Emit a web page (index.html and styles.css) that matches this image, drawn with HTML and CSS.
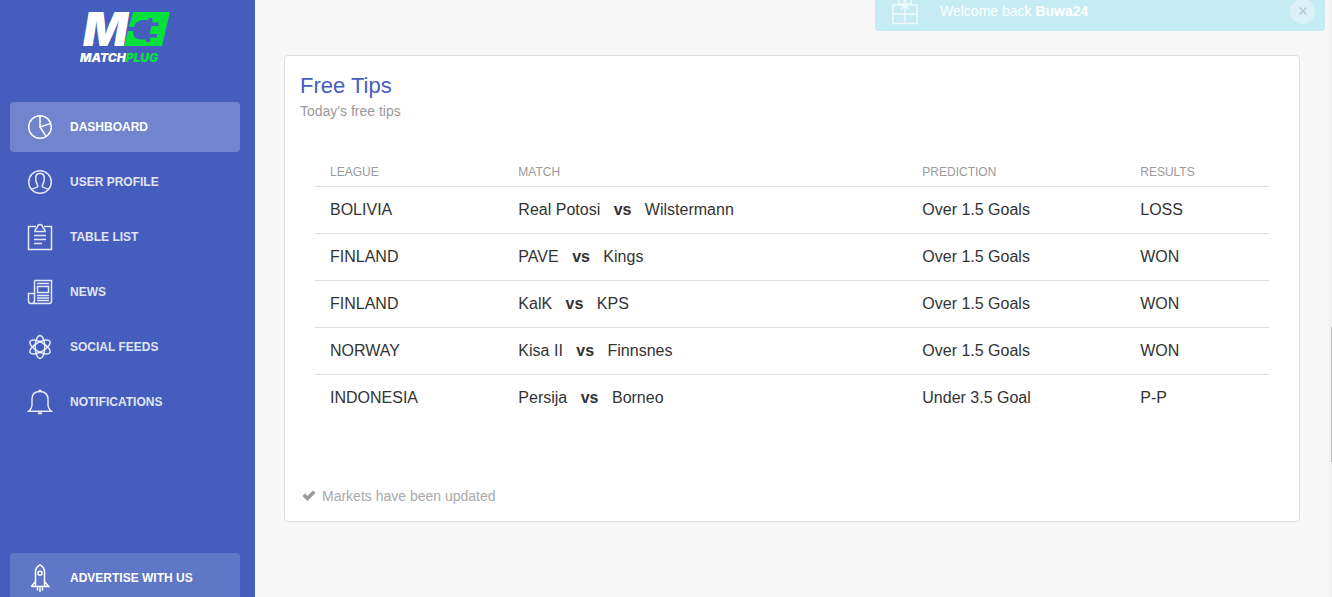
FILE: index.html
```html
<!DOCTYPE html>
<html lang="en">
<head>
    <meta charset="UTF-8">
    <meta name="viewport" content="width=device-width, initial-scale=1.0">
    <title>MatchPlug</title>
    <link rel="stylesheet" href="styles.css">
</head>
<body>
    <div class="wrapper">
        <div class="sidebar">
            <a class="logo" href="#">
                <svg width="100" height="66" viewBox="0 0 100 66">
                    <path class="plug-bg" d="M53 12H90L82 46H44Z"/>
                    <path class="plug" d="M47 27H54C55 22.5 59 20 63.5 20H68.5V18H72.5V22.5H78.5V26H71.5L69.5 34H77V37.5H70V42H66V39.5H61C56 39.5 52.5 36 53 31H46Z"/>
                    <text class="logo-m" x="3" y="46">M</text>
                    <text class="logo-name" x="0" y="62">MATCH<tspan class="green">PLUG</tspan></text>
                </svg>
            </a>
            <ul class="nav">
                <li>
                    <a class="nav-link active" href="#">
                        <svg class="icon" viewBox="0 0 30 30"><circle cx="15" cy="15" r="11.3"/><path d="M15 3.7V15L25.8 11.4M15 15L21.2 24.4"/></svg>
                        <span>DASHBOARD</span>
                    </a>
                </li>
                <li>
                    <a class="nav-link" href="#">
                        <svg class="icon" viewBox="0 0 30 30"><circle cx="15" cy="15" r="11.3"/><path d="M7 22.6C8 20.7 12.8 21 12.8 19.4C12.8 17.5 10.7 16.5 10.7 11.2C10.7 8 12.2 6.5 15 6.5C17.8 6.5 19.3 8 19.3 11.2C19.3 16.5 17.2 17.5 17.2 19.4C17.2 21 22 20.7 23 22.6"/></svg>
                        <span>USER PROFILE</span>
                    </a>
                </li>
                <li>
                    <a class="nav-link" href="#">
                        <svg class="icon" viewBox="0 0 30 30"><path d="M11 4.5H3.5V27.5H26.5V4.5H19M10 9.5H20V8.5C20 6.5 18 6.8 17.6 5C17.3 1.5 12.7 1.5 12.4 5C12 6.8 10 6.5 10 8.5ZM9 13.5H21M9 17.5H21M9 21.5H17"/></svg>
                        <span>TABLE LIST</span>
                    </a>
                </li>
                <li>
                    <a class="nav-link" href="#">
                        <svg class="icon" viewBox="0 0 30 30"><path d="M9.5 3.5H26.5V24Q26.5 26.5 24 26.5H6Q3.5 26.5 3.5 24V16.5H9.5M9.5 3.5V24Q9.5 26.5 6.5 26.5M12 6.5H24M12.5 9.5H23.5V15.5H12.5ZM12 18.5H24M12 21H24M12 23.5H24"/></svg>
                        <span>NEWS</span>
                    </a>
                </li>
                <li>
                    <a class="nav-link" href="#">
                        <svg class="icon" viewBox="0 0 30 30"><ellipse cx="15" cy="15" rx="4.8" ry="11.4"/><ellipse cx="15" cy="15" rx="4.8" ry="11.4" transform="rotate(60 15 15)"/><ellipse cx="15" cy="15" rx="4.8" ry="11.4" transform="rotate(120 15 15)"/></svg>
                        <span>SOCIAL FEEDS</span>
                    </a>
                </li>
                <li>
                    <a class="nav-link" href="#">
                        <svg class="icon" viewBox="0 0 30 30"><path d="M3.8 24.2H26.2C24 22.5 23 20.5 23 17V12C23 7.5 20 4.6 15 4.6C10 4.6 7 7.5 7 12V17C7 20.5 6 22.5 3.8 24.2Z"/><path d="M13.5 3.8H16.5M13 26.2H17" stroke-width="2"/></svg>
                        <span>NOTIFICATIONS</span>
                    </a>
                </li>
            </ul>
            <a class="nav-link advertise" href="#">
                <svg class="icon" viewBox="0 0 30 30"><path d="M10.5 23V9Q10.5 4 15 1.8Q19.5 4 19.5 9V23M6.3 23.4H23.7L19.5 18.5M10.5 18.5L6.3 23.4M12.5 24.5V27.5M15 24.5V29M17.5 24.5V27.5"/><circle cx="15" cy="10.3" r="2"/></svg>
                <span>ADVERTISE WITH US</span>
            </a>
        </div>

        <div class="main-panel">
            <div class="card">
                <h4 class="title">Free Tips</h4>
                <p class="category">Today's free tips</p>
                <div class="content">
                    <table class="table">
                        <thead>
                            <tr>
                                <th class="col-league">LEAGUE</th>
                                <th class="col-match">MATCH</th>
                                <th class="col-prediction">PREDICTION</th>
                                <th>RESULTS</th>
                            </tr>
                        </thead>
                        <tbody>
                            <tr>
                                <td>BOLIVIA</td>
                                <td>Real Potosi <b class="vs">vs</b> Wilstermann</td>
                                <td>Over 1.5 Goals</td>
                                <td>LOSS</td>
                            </tr>
                            <tr>
                                <td>FINLAND</td>
                                <td>PAVE <b class="vs">vs</b> Kings</td>
                                <td>Over 1.5 Goals</td>
                                <td>WON</td>
                            </tr>
                            <tr>
                                <td>FINLAND</td>
                                <td>KalK <b class="vs">vs</b> KPS</td>
                                <td>Over 1.5 Goals</td>
                                <td>WON</td>
                            </tr>
                            <tr>
                                <td>NORWAY</td>
                                <td>Kisa II <b class="vs">vs</b> Finnsnes</td>
                                <td>Over 1.5 Goals</td>
                                <td>WON</td>
                            </tr>
                            <tr>
                                <td>INDONESIA</td>
                                <td>Persija <b class="vs">vs</b> Borneo</td>
                                <td>Under 3.5 Goal</td>
                                <td>P-P</td>
                            </tr>
                        </tbody>
                    </table>
                </div>
                <div class="stats">
                    <svg class="check" width="14" height="12" viewBox="0 0 14 12"><path d="M0.5 6L3 3.6L5.4 6L11 0.6L13.5 3L5.4 11Z"/></svg>
                    <span>Markets have been updated</span>
                </div>
            </div>
        </div>

        <div class="scroll-track">
            <div class="scroll-thumb"></div>
        </div>
    </div>

    <div class="alert">
        <svg class="gift" width="30" height="30" viewBox="0 0 30 30"><path d="M3 9H27V27.5H3ZM3 18H27M15 9V27.5M11 13.5L15 9L19 13.5"/><circle cx="11.5" cy="5.5" r="3"/><circle cx="18.5" cy="5.5" r="3"/></svg>
        <span class="message">Welcome back <b>Buwa24</b></span>
        <button class="close" type="button" aria-label="Close">
            <svg width="10" height="10" viewBox="0 0 10 10"><path d="M1.5 1.5L8.5 8.5M8.5 1.5L1.5 8.5"/></svg>
        </button>
    </div>
</body>
</html>
```
FILE: styles.css
```css
body {
    margin: 0;
    font-family: "Liberation Sans", Arial, sans-serif;
    font-size: 14px;
    line-height: 20px;
    color: #333333;
    background-color: #f7f7f7;
    overflow: hidden;
}

.wrapper {
    display: grid;
    grid-template-columns: 255px 1fr 3px;
    height: 100vh;
}

/* Sidebar */
.sidebar {
    display: flex;
    flex-direction: column;
    box-sizing: border-box;
    height: 100vh;
    padding: 0 15px 0 10px;
    background-color: #455ebe;
}

.logo {
    display: flex;
    padding-left: 70px;
}

.logo-m {
    font: italic 900 47px Inter, sans-serif;
    fill: #ffffff;
}

.logo-name {
    font: italic 900 12px Inter, sans-serif;
    fill: #ffffff;
}

.logo-name .green,
.plug-bg {
    fill: #05e03c;
}

.plug {
    fill: #455ebe;
}

.nav {
    display: flex;
    flex-direction: column;
    gap: 5px;
    margin: 36px 0 0;
    padding: 0;
    list-style: none;
}

.nav-link {
    display: flex;
    align-items: center;
    gap: 15px;
    height: 50px;
    padding-left: 15px;
    border-radius: 4px;
    color: rgba(255, 255, 255, 0.86);
    font-size: 12px;
    font-weight: bold;
    text-decoration: none;
}

.nav-link.active {
    color: #ffffff;
    background-color: rgba(255, 255, 255, 0.24);
}

/* the last link runs a little below the window */
.nav-link.advertise {
    flex-shrink: 0;
    margin-top: auto;
    margin-bottom: -6px;
    color: #ffffff;
    background-color: rgba(255, 255, 255, 0.15);
}

.icon {
    width: 30px;
    height: 30px;
    fill: none;
    stroke: currentColor;
    stroke-width: 1.5;
}

/* Card */
.main-panel {
    padding: 55px 29px 0;
}

.card {
    padding: 15px;
    border: 1px solid #dddddd;
    border-radius: 4px;
    background-color: #ffffff;
}

.title {
    margin: 0;
    color: #455ebe;
    font-size: 22px;
    font-weight: normal;
    line-height: 30px;
}

.category {
    margin: 0;
    color: #9a9a9a;
}

.content {
    padding: 35px 15px 65px;
}

.table {
    width: 100%;
    border-collapse: separate;
    border-spacing: 0;
    table-layout: fixed;
}

.table th {
    padding: 6px 15px 4px;
    border-bottom: 1px solid #dddddd;
    color: #9a9a9a;
    font-size: 12px;
    font-weight: normal;
    text-align: left;
}

.table td {
    padding: 12px 15px;
    border-bottom: 1px solid #dddddd;
    font-size: 16px;
    line-height: 22px;
}

.table tbody tr:last-child td {
    border-bottom: none;
}

.col-league {
    width: 16.6%;
}

.col-match {
    width: 39.2%;
}

.col-prediction {
    width: 19.7%;
}

.vs {
    margin: 0 9px;
}

.stats {
    display: flex;
    align-items: center;
    gap: 6px;
    padding-left: 2px;
    color: #a9a9a9;
}

.check {
    fill: #999999;
}

/* Scrollbar */
.scroll-track {
    background-color: #f1f1f1;
}

.scroll-thumb {
    height: 135px;
    margin: 327px 0 0 2px;
    background-color: #c1c1c1;
}

/* Welcome message */
.alert {
    position: absolute;
    top: -9px;
    right: 7px;
    display: flex;
    align-items: center;
    gap: 20px;
    box-sizing: border-box;
    width: 450px;
    height: 40px;
    padding: 0 10px 0 15px;
    border-radius: 4px;
    color: #ffffff;
    background-color: #c5ebf5;
}

.gift {
    fill: none;
    stroke: #f0fafd;
    stroke-width: 1.5;
}

.message {
    flex: 1;
}

.close {
    display: flex;
    align-items: center;
    justify-content: center;
    width: 25px;
    height: 25px;
    padding: 0;
    border: none;
    border-radius: 50%;
    background-color: #dbf1f7;
    cursor: pointer;
}

.close svg {
    fill: none;
    stroke: #b5c9cf;
    stroke-width: 1.5;
}
```
